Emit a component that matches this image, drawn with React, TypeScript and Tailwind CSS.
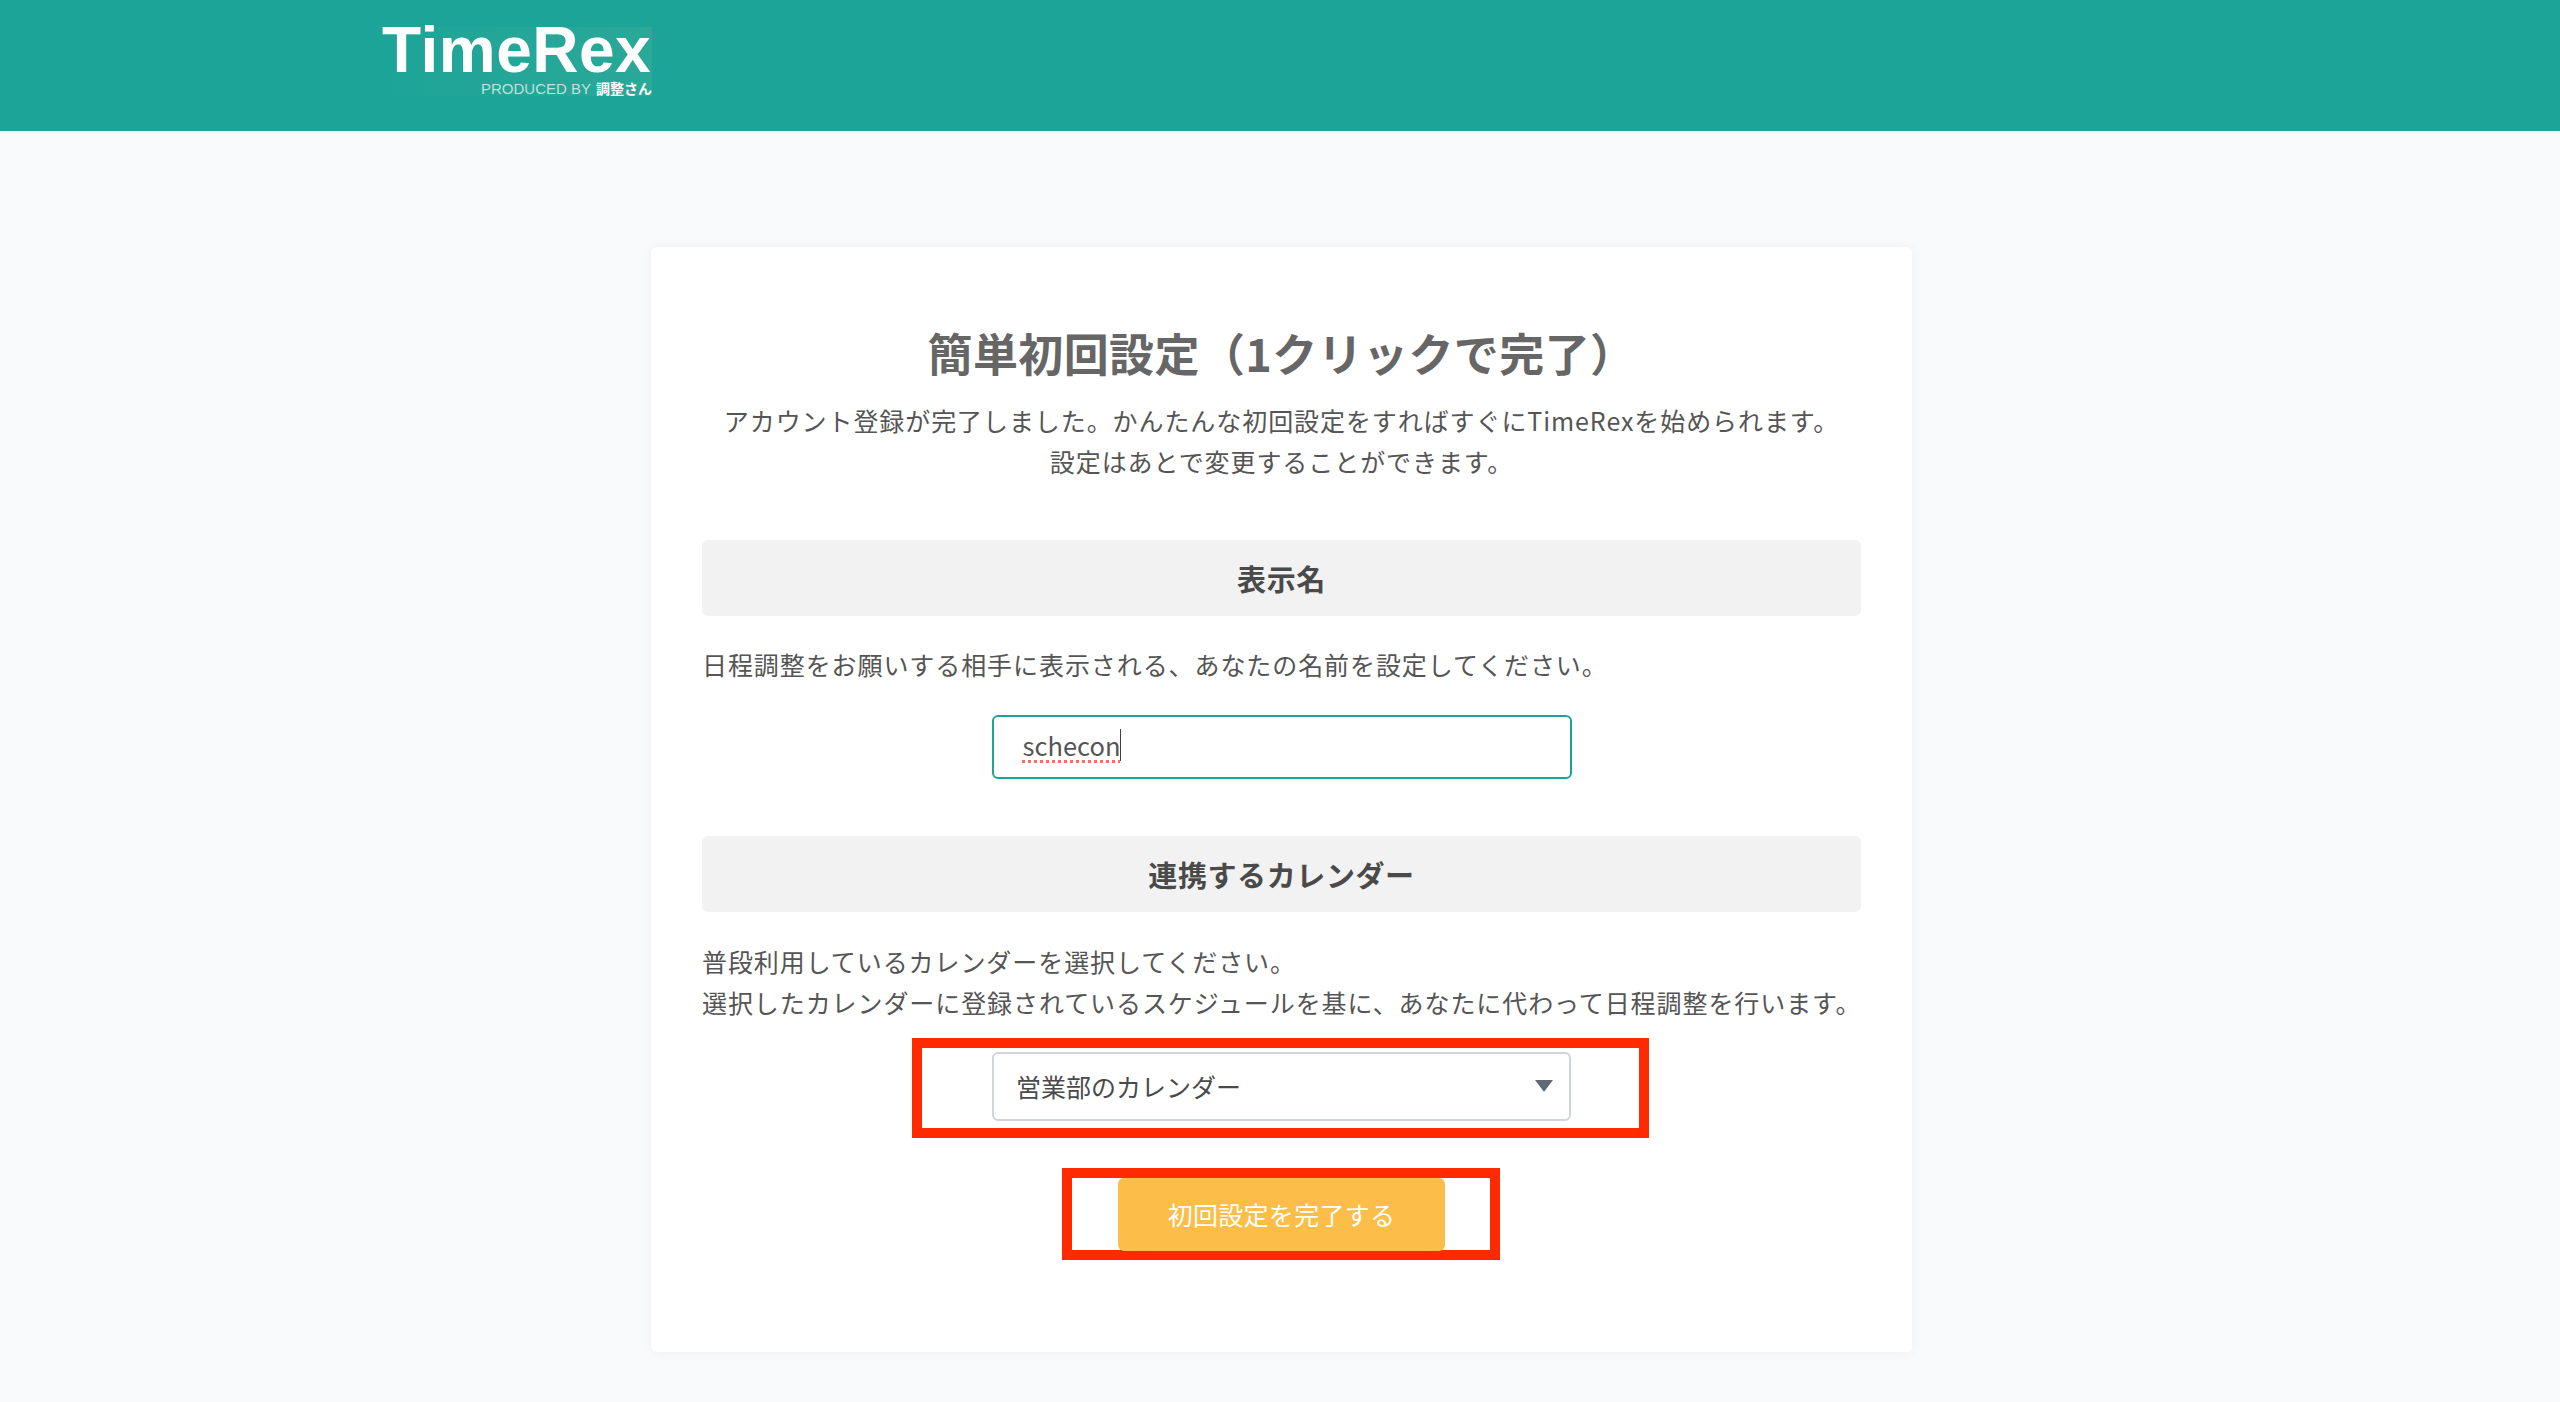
const jp = 'font-["Noto_Sans_CJK_JP","Noto_Sans",sans-serif]';

function SectionBar({ title }: { title: string }) {
  return (
    <div className="h-[76px] rounded-md bg-[#f2f2f2] flex items-center justify-center pt-[1px] text-[29px] font-bold tracking-[0.6px] text-[#4a4a4a]">
      {title}
    </div>
  );
}

function Logo() {
  return (
    <div className="relative w-[270px] h-[69px] bg-gradient-to-r from-[#1da498] to-[#2aa898]">
      <div className='font-["Liberation_Sans",sans-serif] font-bold text-[64px] leading-[46px] h-[46px] tracking-[0.5px] text-white whitespace-nowrap'>
        TimeRex
      </div>
      <div className='absolute right-0 bottom-0 flex items-center gap-[5px] text-[15px] leading-[14px] whitespace-nowrap font-["Liberation_Sans","Noto_Sans_CJK_JP",sans-serif]'>
        <span className="text-white/70">PRODUCED BY</span>
        <span className="text-white font-bold text-[14px]">調整さん</span>
      </div>
    </div>
  );
}

export default function App() {
  return (
    <div className={`min-h-[1402px] bg-[#f9fafc] ${jp}`}>
      <header className="h-[131px] bg-[#1da498] pt-[27px] pl-[382px]">
        <Logo />
      </header>

      <main className="pt-[116px] pb-[50px] pl-[651px]">
        <div className="w-[1261px] h-[1105px] rounded-md bg-white shadow-[0_0_12px_rgba(0,0,0,0.05)] px-[51px] pt-[71px]">
          <h1 className="text-center text-[45px] leading-[70px] font-bold tracking-[0.4px] text-[#666666]">
            簡単初回設定（1クリックで完了）
          </h1>
          <p className="mt-[12px] text-center text-[25px] leading-[41px] text-[#555555] tracking-[0.92px]">
            アカウント登録が完了しました。かんたんな初回設定をすればすぐにTimeRexを始められます。
            <br />
            設定はあとで変更することができます。
          </p>

          <div className="mt-[58px]">
            <SectionBar title="表示名" />
          </div>
          <p className="mt-[28px] text-[25px] leading-[41px] text-[#555555] tracking-[0.92px]">
            日程調整をお願いする相手に表示される、あなたの名前を設定してください。
          </p>
          <div className="mt-[30px] mx-auto w-[580px] h-[64px] rounded-md border-2 border-[#1da498] flex items-center pl-[29px] pb-[4px] text-[25.5px] text-[#555555]">
            <span className="underline decoration-dotted decoration-[3px] decoration-[#ff6b63] underline-offset-[4px]">schecon</span>
            <span className="w-px h-[32px] bg-[#444444]" />
          </div>

          <div className="mt-[57px]">
            <SectionBar title="連携するカレンダー" />
          </div>
          <p className="mt-[29px] text-[25px] leading-[41px] text-[#555555] tracking-[0.92px] whitespace-nowrap">
            普段利用しているカレンダーを選択してください。
            <br />
            選択したカレンダーに登録されているスケジュールを基に、あなたに代わって日程調整を行います。
          </p>

          <div className="mt-[15px] ml-[210px] w-[737px] h-[100px] border-[10px] border-[#ff2a00] flex justify-center items-start pt-[4px] pl-[2px]">
            <div className="w-[579px] h-[69px] rounded-md border-2 border-[#ced4da] flex items-center justify-between pl-[22px] pr-[16px] pt-[1px] text-[25px] text-[#4a4a4a]">
              <span>営業部のカレンダー</span>
              <svg width="18" height="12" viewBox="0 0 18 12" className="mb-[2px]">
                <path d="M0 0h18L9 12z" fill="#5f6c76" />
              </svg>
            </div>
          </div>

          <div className="mt-[30px] ml-[360px] w-[438px] h-[92px] border-[10px] border-[#ff2a00] flex justify-center pl-[1px]">
            <button className="w-[327px] h-[73px] rounded-md bg-[#fcbd49] text-white text-[25px] tracking-[0.3px] pt-[1px]">
              初回設定を完了する
            </button>
          </div>
        </div>
      </main>
    </div>
  );
}
